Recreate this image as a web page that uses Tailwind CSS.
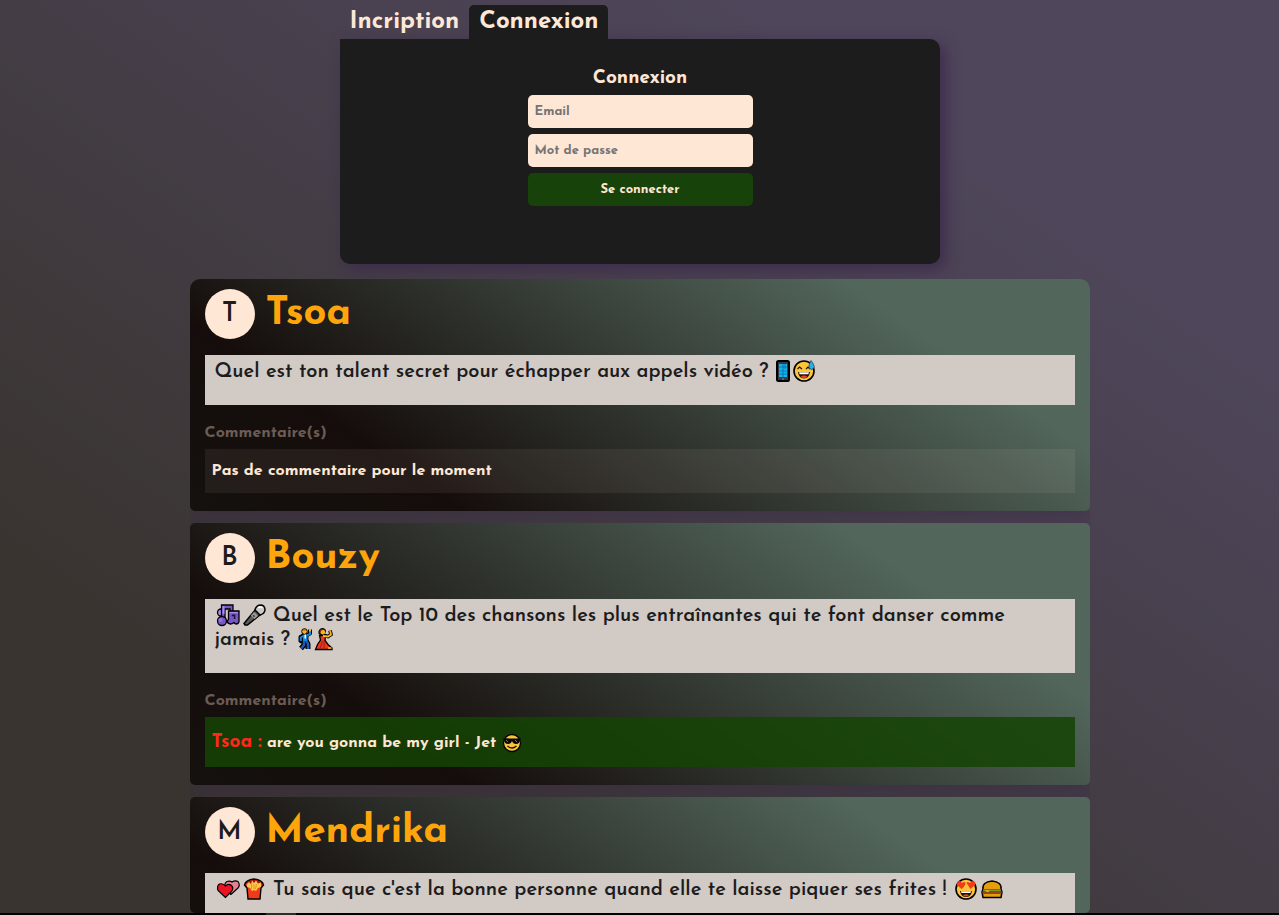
<!DOCTYPE html>
<html lang="fr">
<head>
<meta charset="utf-8">
<meta name="viewport" content="width=device-width, initial-scale=1">
<title>Connexion</title>
<script src="https://cdn.jsdelivr.net/npm/@tailwindcss/browser@4"></script>
</head>
<body class="flex h-screen flex-col overflow-hidden bg-[linear-gradient(35deg,#393430_20%,#4f465b_80%)] font-['Josefin_Sans','Lato',sans-serif] font-bold text-[#ffe7d6]">

<section class="mx-auto mt-[5px] w-full max-w-[600px] shrink-0">
  <nav class="flex h-[34px] text-2xl leading-[30px]" aria-label="Compte">
    <button type="button" class="rounded-t-[5px] px-[10px]">Incription</button>
    <button type="button" class="rounded-t-[5px] bg-[#1c1c1d] px-[10px]">Connexion</button>
  </nav>
  <form class="flex h-[225px] flex-col items-center rounded-[10px] rounded-tl-none bg-[#1c1c1d] pt-[26px] pl-px shadow-[5px_5px_15px_#3d2b4d]">
    <h2 class="mb-[2px] text-[19px] leading-7">Connexion</h2>
    <div class="flex w-[225px] flex-col gap-[6px] text-[13px]">
      <input type="email" aria-label="Email" placeholder="Email" class="h-[33px] rounded-[5px] bg-[#ffe7d6] px-[7px] text-[#1c1c1d] placeholder:text-[#757575]">
      <input type="password" aria-label="Mot de passe" placeholder="Mot de passe" class="h-[33px] rounded-[5px] bg-[#ffe7d6] px-[7px] text-[#1c1c1d] placeholder:text-[#757575]">
      <button type="submit" class="h-[33px] rounded-[5px] bg-[#174209]">Se connecter</button>
    </div>
  </form>
</section>

<main class="mx-auto mt-[15px] flex min-h-0 w-full max-w-[900px] flex-1 flex-col gap-3 overflow-hidden rounded-[5px] rounded-t-[10px]">
  <article class="shrink-0 rounded-[5px] bg-[linear-gradient(35deg,#14110e_0%,#150d0b_22%,#52665b_80%)] px-[15px] pt-[10px] pb-[18px] shadow-[0_5px_15px_#3d2b4d80]">
    <header class="flex h-[50px] gap-[11px]">
      <span class="flex size-[50px] items-center justify-center rounded-full bg-[#ffe7d6] text-[26px] font-semibold text-[#1c1c1d]">T</span>
      <h2 class="text-[40px] leading-[50px] text-[#ffa50c]">Tsoa</h2>
    </header>
    <p class="mt-4 bg-[#d2cac4] px-[10px] pt-[5px] pb-[21px] text-[20px] leading-6 font-semibold text-[#1c1c1d]">Quel est ton talent secret pour échapper aux appels vidéo ?
      <svg class="-my-1 inline-block h-6 w-4 align-[-2px]" viewBox="0 0 16 24" role="img" aria-label="téléphone"><rect x="2" y="2" width="12" height="20" rx="1.500" fill="#333b44" stroke="#000" stroke-width="2"/><path fill="#12b4f0" d="M4 5h8v13H4z"/><path d="M4 8h4M8 5v13M4 12h8M4 15h8M10 5v5M8 8h4" stroke="#075b80" stroke-width=".6"/><path d="M7 20h2" stroke="#888"/></svg><svg class="-my-1 inline-block h-6 w-[26px] align-[-2px]" viewBox="0 0 26 24" role="img" aria-label="sourire gêné"><circle cx="13" cy="12" r="10" fill="#fcc43a" stroke="#000" stroke-width="1.600"/><path d="m6.500 10 2-2 2.500 2m4 0 2-2 2 2" fill="none" stroke="#241200" stroke-width="1.200"/><path d="M7 13h12q-1 6.500-6 6.500T7 13z" fill="#241200"/><path d="M8 13.300h10l-.6 2H8.600z" fill="#fff"/><path d="M9.500 17.700q3.500-2.500 7 0-3.500 2.600-7 0" fill="#f23b2e"/><path d="M20 1.500q4 5 3 7.500-2.500 3-5 0-.8-2.500 2-7.500z" fill="#28b2ec" stroke="#092634" stroke-width=".6"/></svg></p>
    <h3 class="mt-[18px] text-base leading-5 text-[#6b5c55]">Commentaire(s)</h3>
    <p class="mt-[6px] bg-[#ffe7d6]/7 px-[7px] py-[10px] text-base leading-6">Pas de commentaire pour le moment</p>
  </article>

  <article class="shrink-0 rounded-[5px] bg-[linear-gradient(35deg,#14110e_0%,#150d0b_22%,#52665b_80%)] px-[15px] pt-[10px] pb-[18px] shadow-[0_5px_15px_#3d2b4d80]">
    <header class="flex h-[50px] gap-[11px]">
      <span class="flex size-[50px] items-center justify-center rounded-full bg-[#ffe7d6] text-[26px] font-semibold text-[#1c1c1d]">B</span>
      <h2 class="text-[40px] leading-[50px] text-[#ffa50c]">Bouzy</h2>
    </header>
    <p class="mt-4 bg-[#d2cac4] px-[10px] pt-[5px] pb-[21px] text-[20px] leading-6 font-semibold text-[#1c1c1d]"><svg class="-my-1 inline-block h-6 w-[26px] align-[-2px]" viewBox="0 0 26 24" role="img" aria-label="notes de musique"><g stroke="#000" stroke-width="1.300"><circle cx="6" cy="9.500" r="3.500" fill="#a98bf0"/><path d="M6.500 2H18v7h-3V6h-5v13H6.500z" fill="#7856c6"/><circle cx="7" cy="18" r="4.500" fill="#7856c6"/><path d="M13.500 8H24v10.500q-.5 2.500-3 2.500-2-.3-2-2-.8 2-3.500 2-3-.3-3-2.500 0-1.500 1-2.300z" fill="#7856c6"/></g><path d="M7.500 3h2v8h-2z" fill="#a98bf0"/><path d="M16.800 11.500h3.500V16h-1.500v-2.800h-2z" fill="#20143b"/><circle cx="5.500" cy="17" r="2" fill="#9373de"/><path d="M14.500 9H23v1.200h-8.500z" fill="#a98bf0"/></svg><svg class="-my-1 inline-block h-6 w-[26px] align-[-2px]" viewBox="0 0 26 24" role="img" aria-label="microphone"><path d="m14.500 6.500 5 5L6.500 22H4l-1-1.500z" fill="#5c5c5c" stroke="#000" stroke-width="1.500"/><path d="m13 9 4 4-3.500 3-3.700-3.500z" fill="#999"/><path d="m12 12.500 1.500 1" stroke="#222" stroke-width="1.500"/><path d="M14 7q1-5 6-5 4 .5 4 5-.5 4-5 5z" fill="#c9c9c9" stroke="#000" stroke-width="1.500"/><path d="M17.500 5q1.500-2 4 0" fill="none" stroke="#fff" stroke-width="1.500"/></svg>
      Quel est le Top 10 des chansons les plus entraînantes qui te font danser comme jamais ?
      <svg class="-my-1 inline-block h-6 w-[18px] align-[-2px]" viewBox="0 0 18 24" role="img" aria-label="danseur"><g fill="none" stroke="#000" stroke-linejoin="round"><path d="M8 8 4.500 10v4l2 1M11 8l3-1.500V2.500" stroke-width="4"/><path d="M8 14v4l-3 3.500M10.500 14l1.500 3v5" stroke-width="5"/></g><path d="M6.500 7h5.500v8H6.500z" fill="#1686e6" stroke="#000"/><circle cx="8.500" cy="4.500" r="2.800" fill="#fbb719" stroke="#000"/><path d="M6.500 3.500q2-2.500 4 0z" fill="#a85b12"/><g fill="none"><path d="M8 8.500 4.800 10.500V14M11 8.500l3-1.500V4" stroke="#1686e6" stroke-width="2"/><path d="M14 2v2.500" stroke="#fbb719" stroke-width="2"/><path d="M8 14v4l-3 3.500M10.500 14l1.500 3v5" stroke="#1b58ae" stroke-width="2.600"/></g><path d="M8.500 7.500h1.500v4H8.500z" fill="#fff"/></svg><svg class="-my-1 inline-block h-6 w-[20px] align-[-2px]" viewBox="0 0 20 24" role="img" aria-label="danseuse"><path d="m9 8 5 1.500 3-2-1-4" fill="none" stroke="#000" stroke-width="3.600"/><path d="M5.500 8.500h6l-.5 5 3 4 4 3.500v1.500H1.500l2-5 3-4.500z" fill="#e53b20" stroke="#000" stroke-width="1.300"/><path d="M5 7V4q1-3 4-2.500 3 .5 2.500 3L10 8z" fill="#6f3518" stroke="#000"/><circle cx="9" cy="5.200" r="2.200" fill="#fbb719"/><path d="m9 9 5 .5 3-2-1-4" fill="none" stroke="#fbb719" stroke-width="1.800"/><path d="m8.500 14-2.500 7.500m4-7v7" stroke="#a91613"/><path d="M14 21h3.500" stroke="#fbb719" stroke-width="1.500"/></svg></p>
    <h3 class="mt-[18px] text-base leading-5 text-[#6b5c55]">Commentaire(s)</h3>
    <p class="mt-[6px] bg-[#144404]/85 px-[7px] pt-[14px] pb-3 text-base leading-6"><span class="text-[19px] leading-6 text-[#ff281c]">Tsoa :</span> are you gonna be my girl - Jet
      <svg class="-my-1 inline-block size-5 align-[-2px]" viewBox="0 0 20 20" role="img" aria-label="lunettes de soleil"><circle cx="10" cy="10" r="8.500" fill="#fcc43a" stroke="#000" stroke-width="1.300"/><path d="M1 5q9 1 18 0l-1 2q-.5 4-4 4-3 0-4-3-1 3-4 3-3.500 0-4-4z" fill="#090909"/><path d="m4 7 2 2m7-2 2 2" stroke="#777"/><path d="M5.500 13q4.500 4 9 0" fill="none" stroke="#241200" stroke-width="1.200"/></svg></p>
  </article>

  <article class="shrink-0 rounded-[5px] bg-[linear-gradient(35deg,#14110e_0%,#150d0b_22%,#52665b_80%)] px-[15px] pt-[10px] pb-[18px] shadow-[0_5px_15px_#3d2b4d80]">
    <header class="flex h-[50px] gap-[11px]">
      <span class="flex size-[50px] items-center justify-center rounded-full bg-[#ffe7d6] text-[26px] font-semibold text-[#1c1c1d]">M</span>
      <h2 class="text-[40px] leading-[50px] text-[#ffa50c]">Mendrika</h2>
    </header>
    <p class="mt-4 bg-[#d2cac4] px-[10px] pt-[5px] pb-[120px] text-[20px] leading-6 font-semibold text-[#1c1c1d]"><svg class="-my-1 inline-block h-6 w-[26px] align-[-2px]" viewBox="0 0 26 24" role="img" aria-label="deux cœurs"><path d="m16 17.500-6-7q-1-4.500 2-6 3-1 5 .5 3-2 6-.5 2.500 3.500 0 6.500z" fill="#e77f8e" stroke="#000" stroke-width="1.200"/><path d="m10.500 20.500-7.500-7Q1.500 9 4.500 7q4-1 6 2 3-3 6-.5 2.500 2.500 0 6z" fill="#e91524" stroke="#000" stroke-width="1.200"/></svg><svg class="-my-1 inline-block h-6 w-[26px] align-[-2px]" viewBox="0 0 26 24" role="img" aria-label="frites"><path d="M3.500 8q1-5 9.500-6 8.500 1 9.500 6l-2.500 3-1 11H7L6 11z" fill="#ef3a1c" stroke="#000" stroke-width="1.400"/><path d="M5 7q3-4 8-4t8 4z" fill="#9b1515"/><path d="m6 7 2-2 2 2 1-3.500 2 2.500 2-2.500 2 3 3-1v4.500l-3 1-2 3-2-1-2 1-2-3-3-1z" fill="#fcc64c"/><path d="M10.500 6v6M13 7v5m2.500-5-1 5" stroke="#dd8a1d" stroke-width=".8"/></svg>
      Tu sais que c'est la bonne personne quand elle te laisse piquer ses frites !
      <svg class="-my-1 inline-block h-6 w-[26px] align-[-2px]" viewBox="0 0 26 24" role="img" aria-label="yeux en cœur"><circle cx="13" cy="12" r="10" fill="#fcc43a" stroke="#000" stroke-width="1.600"/><path d="M8.500 12 4 8q-1-3.500 2-4 2 0 3 2 2.500-2 3.500 0 0 3-4 6zM17.500 12l-4-6q1-2 3.500 0 1-2 3-2 3 .5 2 4z" fill="#f23b1c"/><path d="M7 14h12q-1 6-6 6t-6-6z" fill="#241200"/><path d="M8 14.300h10l-.5 1.700h-9z" fill="#fff"/><path d="M10 18.500q3-2.500 6 0-3 2-6 0" fill="#f23b2e"/></svg><svg class="-my-1 inline-block h-6 w-[26px] align-[-2px]" viewBox="0 0 26 24" role="img" aria-label="hamburger"><path d="M4 12q-1-7 9-8 10 1 9 8l1 3-1 5.500H4L3 15z" fill="#e69c0c" stroke="#000" stroke-width="1.500"/><path d="M4 12h18v1.500H4z" fill="#27911f"/><path d="M3.500 14h19v3h-19z" fill="#8c4921"/><path d="M5 13.500h6l-2 1.500z" fill="#ffc94b"/></svg></p>
  </article>
</main>

<footer class="h-[2px] shrink-0 bg-black"><div class="ml-[266px] h-full w-[30px] bg-[#2d2d2d]"></div></footer>
</body>
</html>
